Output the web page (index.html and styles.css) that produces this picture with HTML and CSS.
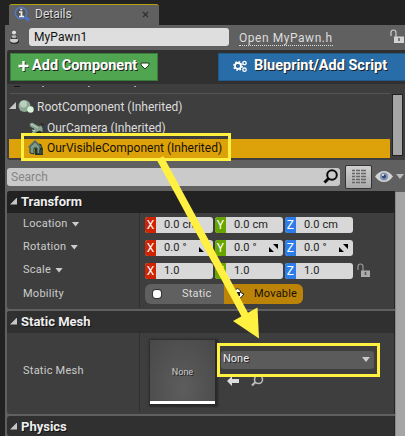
FILE: index.html
```html
<!DOCTYPE html>
<html lang="en">
<head>
<meta charset="utf-8">
<title>Details</title>
<link rel="stylesheet" href="styles.css">
</head>
<body>
<div class="tabbar"><div class="tab">
<svg width="17" height="17" viewBox="0 0 17 17"><path d="M11 11l4 3.500" stroke="#4971c5" stroke-width="3"/><circle cx="7" cy="7" r="5.600" fill="#555" stroke="#5279c8" stroke-width="1.500"/><path d="M5 6h2.500v4M5 10.500h5M6.300 3.500h2" stroke="#eee" stroke-width="1.700" fill="none"/></svg>
<span class="tab-name">Details</span><svg class="close" width="7" height="7" viewBox="0 0 7 7"><path d="M1 1l5 5M6 1l-5 5" stroke="#303030" stroke-width="1.100"/></svg></div></div>
<main class="panel">
<div class="name-row">
<svg class="pawn" width="11" height="16" viewBox="0 0 11 16"><ellipse cx="5.500" cy="12.500" rx="4.500" ry="2.500" fill="#292929"/><ellipse cx="5" cy="11.300" rx="4" ry="2.400" fill="#ccc"/><path d="M2 9.500h6" stroke="#333"/><ellipse cx="5" cy="7.500" rx="2.900" ry="2" fill="#bbb" stroke="#333" stroke-width=".8"/><circle cx="5" cy="3.500" r="2.500" fill="#ddd" stroke="#333" stroke-width=".7"/></svg>
<div class="name-input">MyPawn1</div><span class="link">Open MyPawn.h</span>
<svg class="lock" width="14" height="15" viewBox="0 0 14 15"><path d="M1 7V3.500Q1 1 3.500 1T6 3.500V8" fill="none" stroke="#ccc" stroke-width="1.200"/><path d="M4 7.500h10V14H4z" fill="#d2d2d2"/><path d="M9 9v3" stroke="#555" stroke-width="1.500"/></svg>
</div>
<section class="components">
<div class="buttons">
<div class="btn add"><svg width="11" height="12" viewBox="0 0 11 12"><path d="M6.500 2v10M2 7h9" stroke="#183018" stroke-width="2"/><path d="M5.500 1v10M.5 6h10" stroke="#fff" stroke-width="2.400"/></svg><span>Add Component</span><svg width="10" height="8" viewBox="0 0 10 8"><path d="M1 1h8v2L5 7 1 3z" fill="#fff" stroke="#1d3b1d"/></svg></div>
<div class="btn bp"><svg width="15" height="13" viewBox="0 0 15 13"><g fill="none" stroke="#112b42" transform="translate(.7 .7)"><circle cx="5" cy="6" r="3"/></g><g fill="none" stroke="#fff"><circle cx="5" cy="6" r="3" stroke-width="1.800"/><circle cx="5" cy="6" r="4.300" stroke-width="1.300" stroke-dasharray="1.700 1.680"/><circle cx="11.500" cy="3" r="1.700" stroke-width="1.300"/><circle cx="11.500" cy="9.700" r="1.700" stroke-width="1.300"/></g></svg><span>Blueprint/Add Script</span></div>
</div>
<div class="tree">
<div class="clipped"><i></i><i></i><i></i><i></i></div>
<div class="node root"><svg width="28" height="18" viewBox="0 0 28 18"><path d="M9 4v7H2z" fill="#c6c6c6"/><circle cx="17.500" cy="8" r="6" fill="#8fa895"/><circle cx="16.500" cy="6" r="3.500" fill="#bad0bf"/><circle cx="23.500" cy="11.500" r="3.200" fill="#d9f2dc"/></svg><span>RootComponent (Inherited)</span></div>
<div class="node cam"><svg width="18" height="16" viewBox="0 0 18 16"><path d="M4 12l6-2 6 3-8 1z" fill="#1c1c1c"/><path d="M1 4l3-2 7 4 2-1 2 3v5l-3-2-3 1-3 2-3-1 3-4-4-2z" fill="#8aa491" stroke="#2c3a31" stroke-width=".8"/><path d="M3 4l7 4M4 10l3 1" stroke="#c0d2c4"/><path d="M13 3l1 2 2-1M11 12l2 2" stroke="#222" fill="none"/></svg><span>OurCamera (Inherited)</span></div>
<div class="node vis"><svg width="18" height="17" viewBox="0 0 18 17"><path d="M7 4l6 1 2 5v6H7z" fill="#26312b"/><path d="M2 8l5-5 5 5v6l-3 1V9H6v6l-4-1z" fill="#7b9a87" stroke="#293c31" stroke-width="1"/><path d="M.5 8.500L7 2l6 6.500" fill="none" stroke="#5d7667" stroke-width="1.700"/><path d="M11 11h4v4h-4z" fill="#38483f"/></svg><span>OurVisibleComponent (Inherited)</span></div>
<div class="tree-scroll"></div>
</div>
</section>
<div class="filter">
<div class="search"><span>Search</span><svg width="16" height="17" viewBox="0 0 16 17"><circle cx="9" cy="7" r="4.800" fill="none" stroke="#0b0b0b" stroke-width="2"/><path d="M5.500 10.500l-4 4" stroke="#0b0b0b" stroke-width="3"/></svg></div>
<div class="grid-btn"><svg width="14" height="15" viewBox="0 0 14 15"><path d="M0 1.500h3m1 0h4m1 0h5M0 4.500h3m1 0h4m1 0h5M0 7.500h3m1 0h4m1 0h5M0 10.500h3m1 0h4m1 0h5M0 13.500h3m1 0h4m1 0h5" stroke="#666" stroke-width="1.700"/></svg></div>
<svg class="eye" width="18" height="13" viewBox="0 0 18 13"><path d="M0 6.500Q4 1 9 1t9 5.500Q14 12 9 12T0 6.500" fill="#d2d2d2"/><circle cx="9" cy="6.500" r="4" fill="#8093b5"/><circle cx="9" cy="6.500" r="2" fill="#304973"/><circle cx="8" cy="5" r="1" fill="#eee"/></svg>
<svg class="eye-caret" width="8" height="5"><path d="M0 0h8L4 5z" fill="#bbb"/></svg>
</div>
<div class="details">
<div class="cats">
<section class="cat transform"><h2><i class="exp"></i>Transform</h2>
<div class="prop"><label>Location<i class="caret"></i></label><div class="vec"><div class="num x"><b>X</b><span>0.0 cm</span></div><div class="num y"><b>Y</b><span>0.0 cm</span></div><div class="num z"><b>Z</b><span>0.0 cm</span></div></div></div>
<div class="prop"><label>Rotation<i class="caret"></i></label><div class="vec">
<div class="num x"><b>X</b><span>0.0 °</span><svg width="9" height="8" viewBox="0 0 9 8"><path d="M4 0h5v5zM0 3l5 5H0z"/></svg></div>
<div class="num y"><b>Y</b><span>0.0 °</span><svg width="9" height="8" viewBox="0 0 9 8"><path d="M4 0h5v5zM0 3l5 5H0z"/></svg></div>
<div class="num z"><b>Z</b><span>0.0 °</span><svg width="9" height="8" viewBox="0 0 9 8"><path d="M4 0h5v5zM0 3l5 5H0z"/></svg></div></div></div>
<div class="prop"><label>Scale<i class="caret"></i></label><div class="vec"><div class="num x"><b>X</b><span>1.0</span></div><div class="num y"><b>Y</b><span>1.0</span></div><div class="num z"><b>Z</b><span>1.0</span></div><svg class="scale-lock" width="14" height="15" viewBox="0 0 14 15"><path d="M1 7V3.500Q1 1 3.500 1T6 3.500V8" fill="none" stroke="#999" stroke-width="1.200"/><path d="M4 7.500h9V14H4z" fill="#aaa"/><path d="M8.500 9v3" stroke="#555" stroke-width="1.500"/></svg></div></div>
<div class="prop mobility"><label>Mobility</label><div class="seg"><div class="static"><i></i><span>Static</span></div><div class="movable"><svg width="14" height="14" viewBox="0 0 14 14"><path d="M6.500 1l3 3v1.500l3.500 1.500-3.500 4-3 2-3-2-3-4 3-3z" fill="#fff" stroke="#222"/><path d="M5 5h4v4H5z" fill="#222"/></svg><span>Movable</span></div></div></div>
</section>
<section class="cat mesh"><h2><i class="exp"></i>Static Mesh</h2>
<div class="mesh-body"><label>Static Mesh</label><div class="asset"><div class="thumb">None</div><div class="picker"><div class="combo"><span>None</span><i class="caret"></i></div>
<div class="tools"><svg width="12" height="10" viewBox="0 0 12 10"><path d="M0 5l5-5v3h7v4H5v3z" fill="#ddd"/></svg><svg width="13" height="13" viewBox="0 0 13 13"><circle cx="7.500" cy="5.500" r="4" fill="none" stroke="#bbb" stroke-width="1.600"/><path d="M4.500 8l-3.500 3.500" stroke="#bbb" stroke-width="2.200"/></svg></div></div></div></div>
</section>
<section class="cat physics"><h2><i class="exp"></i>Physics</h2></section>
</div>
<div class="scroll"></div>
</div>
</main>
<svg class="callout" width="405" height="436" viewBox="0 0 405 436"><g fill="none" stroke="#fff041" stroke-width="3"><path d="M22.500 134.500h207v25h-207zM218.500 344.500h160v31h-160z"/><path d="M160 158L246 317" stroke-width="7.500"/></g><path d="M233 321l24.500-13.500L259 338.500z" fill="#fff041"/></svg>
</body>
</html>
```
FILE: styles.css
```css
* { box-sizing: border-box; }
body { margin: 0; width: 405px; height: 436px; overflow: hidden; position: relative; background: #222; color: #ddd; font: 12px/16px Roboto, sans-serif; }
svg { display: block; flex: none; }
span { white-space: nowrap; }
.tabbar { height: 25px; padding: 4px 0 0 9px; }
.tab { width: 150px; height: 21px; display: flex; align-items: center; padding: 0 10px 2px 5px; background: #606060; border-top: 1px solid #b5a00c; border-radius: 3px 3px 0 0; }
.tab-name { margin-left: 4px; font-size: 12px; text-shadow: 1px 1px #222; }
.close { margin-left: auto; }
.panel { margin-left: 5px; height: 411px; background: #606060; padding-left: 2px; }
.name-row { height: 25px; display: flex; align-items: flex-start; padding: 3px 1px 0 2px; }
.pawn { margin: 1px 9px 0 0; }
.name-input { width: 200px; height: 18px; padding: 1px 5px; background: #dedede; color: #111; border-radius: 3px; letter-spacing: .1px; }
.link { height: 18px; margin: 0 0 0 10px; padding-top: 3px; line-height: 15px; border-bottom: 1px dotted #ddd; letter-spacing: .55px; }
.lock { margin: 1px 0 0 auto; }
.components { height: 110px; background: #3e3e3e; border-radius: 3px 0 0 3px; overflow: hidden; }
.buttons { height: 34px; padding: 3px 0 0 3px; display: flex; justify-content: space-between; background: #303030; }
.btn { height: 28px; display: flex; align-items: center; padding-bottom: 2px; color: #fff; font-size: 14.5px; font-weight: 700; text-shadow: 1px 1px #222; }
.add { width: 148px; padding-left: 7px; gap: 3px; background: #50a650; border: 1px solid #397b39; }
.bp { width: 187px; padding-left: 14px; gap: 6px; background: #286da7; border: 1px solid #235986; border-right: 0; }
.tree { height: 76px; position: relative; display: flex; flex-direction: column; }
.clipped { height: 10px; margin: 0 15px 0 3px; padding: 2px 4px; border-bottom: 1px solid #555; display: flex; gap: 44px; }
.clipped i { width: 2px; height: 1px; background: #aaa; }
.clipped i:first-child { width: 6px; margin-right: -22px; background: #151515; }
.node { display: flex; align-items: center; flex: none; }
.root { height: 25px; padding-top: 1px; gap: 2px; }
.cam { height: 20px; padding: 0 0 2px 21px; gap: 1px; }
.vis { height: 19px; margin: 0 15px 0 2px; padding: 0 0 2px 19px; gap: 1px; background: #dda109; color: #171204; }
.tree-scroll { position: absolute; right: 2px; top: 10px; width: 11px; height: 62px; background: #a5a5a5; border: 1px solid #222; }
.filter { height: 31px; display: flex; align-items: center; padding-top: 2px; }
.search { width: 333px; height: 18px; display: flex; align-items: center; justify-content: space-between; padding: 0 1px 0 4px; background: #cacaca; color: #858585; border-radius: 3px; }
.grid-btn { width: 27px; height: 24px; margin-left: 5px; display: flex; align-items: center; justify-content: center; background: linear-gradient(#d0d0d0, #aaa); border: 1px solid #333; border-radius: 2px; }
.eye { margin-left: 3px; }
.eye-caret { margin-left: 3px; }
.details { height: 245px; display: flex; }
.cats { width: 388px; }
.scroll { width: 10px; height: 244px; margin-top: 1px; background: #a5a5a5; border-left: 1px solid #888; }
.cat { background: #3e3e3e; border-radius: 3px 0 0 3px; overflow: hidden; border-right: 1px solid #262626; }
h2 { height: 22px; margin: 0; display: flex; align-items: center; background: #303030; color: #eee; font-size: 13px; font-weight: 700; text-shadow: 1px 1px #111; }
.transform h2 { background: #222; }
.exp { width: 7px; height: 7px; margin: -2px 4px 0 3px; background: #c6c6c6; clip-path: polygon(100% 0, 100% 100%, 0 100%); }
.transform { height: 118px; }
.mesh { height: 103px; margin-top: 2px; }
.physics { height: 20px; margin-top: 2px; }
label { width: 133px; flex: none; display: flex; align-items: center; padding: 0 0 2px 16px; border-right: 1px solid #303030; color: #ccc; font-size: 11px; letter-spacing: .25px; }
.prop { height: 23px; display: flex; }
.caret { width: 8px; height: 5px; margin: 1px 0 0 4px; background: #ccc; clip-path: polygon(0 0, 100% 0, 50% 100%); }
.vec { display: flex; align-items: center; padding-left: 5px; gap: 2px; }
.num { width: 68px; height: 16px; display: flex; align-items: center; background: #d8d8d8; border-radius: 3px; overflow: hidden; color: #222; font-size: 11px; line-height: 15px; letter-spacing: .1px; }
.num b { width: 11px; height: 16px; line-height: 16px; text-align: center; font-size: 12px; font-weight: 400; color: #fff; }
.num span { margin: -1px 0 0 8px; }
.num svg { margin: 0 5px 0 auto; }
.x b { background: #ce2401; }
.y b { background: #69a500; }
.z b { background: #2c7ce9; }
.scale-lock { margin-left: 2px; }
.mobility { height: 26px; }
.seg { display: flex; margin: 2px 0 0 5px; width: 158px; height: 20px; border-radius: 6px; overflow: hidden; font-size: 11px; letter-spacing: .2px; }
.static, .movable { width: 79px; display: flex; align-items: center; padding-bottom: 1px; background: #606060; }
.static i { width: 8px; height: 8px; margin: 1px 21px 0 8px; border-radius: 3px; background: #fff; box-shadow: 0 0 0 1px #333; }
.movable { padding-left: 7px; gap: 9px; background: #bc8309; color: #181204; }
.mesh-body { height: 81px; display: flex; }
.mesh-body label { margin-bottom: 2px; padding-bottom: 4px; }
.asset { display: flex; padding: 7px 0 0 10px; }
.thumb { width: 65px; height: 64px; padding-top: 24px; text-align: center; font-size: 9px; color: #ccc; background: radial-gradient(at 50% 80%, #5d5d5d, #484848); border-bottom: 3px solid #fff; box-shadow: 1px 1px 2px 2px #292929; text-shadow: 1px 1px #222; }
.picker { margin: 11px 0 0 6px; }
.combo { width: 153px; height: 18px; display: flex; align-items: center; justify-content: space-between; padding: 0 4px 2px 2px; background: #5b5b5b; border-radius: 3px; color: #eee; font-size: 11px; text-shadow: 1px 1px #222; }
.tools { display: flex; align-items: center; gap: 12px; padding: 5px 0 0 6px; }
.callout { position: absolute; left: 0; top: 0; }
```
